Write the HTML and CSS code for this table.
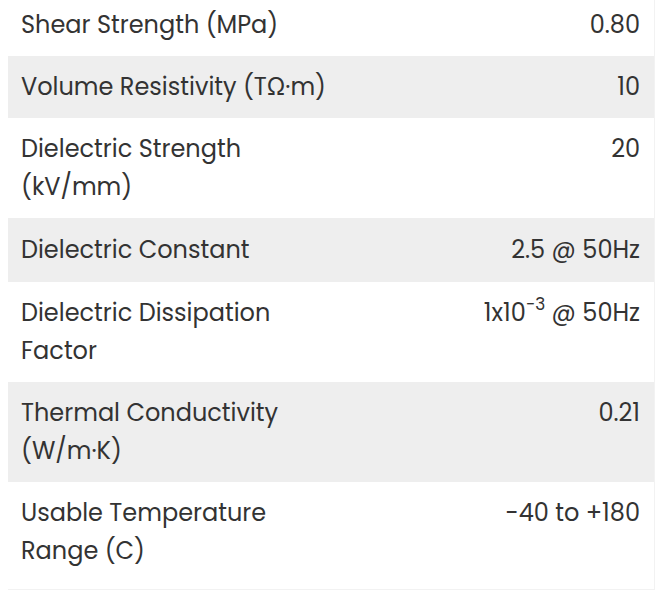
FILE: index.html
```html
<!DOCTYPE html>
<html>
<head>
<meta charset="utf-8">
<link rel="stylesheet" href="styles.css">
</head>
<body>
<div class="table">
  <div class="row"><div class="name">Shear Strength (MPa)</div><div class="val">0.80</div></div>
  <div class="row alt"><div class="name">Volume Resistivity (TΩ·m)</div><div class="val">10</div></div>
  <div class="row"><div class="name">Dielectric Strength (kV/mm)</div><div class="val">20</div></div>
  <div class="row alt tall"><div class="name">Dielectric Constant</div><div class="val">2.5 @ 50Hz</div></div>
  <div class="row"><div class="name">Dielectric Dissipation Factor</div><div class="val">1x10<sup>−3</sup> @ 50Hz</div></div>
  <div class="row alt"><div class="name">Thermal Conductivity (W/m·K)</div><div class="val">0.21</div></div>
  <div class="row"><div class="name">Usable Temperature Range (C)</div><div class="val">-40 to +180</div></div>
</div>
</body>
</html>
```
FILE: styles.css
```css
html, body { margin: 0; padding: 0; background: #fff; }
body { padding: 0 0 0 8px; }
.table {
  width: 646px;
  margin-top: -6px;
  padding-bottom: 7px;
  border-right: 1px solid #f2f2f2;
  border-bottom: 1px solid #f2f2f2;
  font-family: "Poppins", "Inter", sans-serif;
  font-size: 24px;
  line-height: 38px;
  color: #333;
}
.row {
  display: grid;
  grid-template-columns: 312px 1fr;
  padding: 12px 14px 12px 13px;
  column-gap: 10px;
}
.row.tall { padding-top: 13px; padding-bottom: 13px; }
.row.alt { background: #eeeeee; }
.val { text-align: right; }
.val sup { font-size: 17px; line-height: 0; vertical-align: 11px; }
```
